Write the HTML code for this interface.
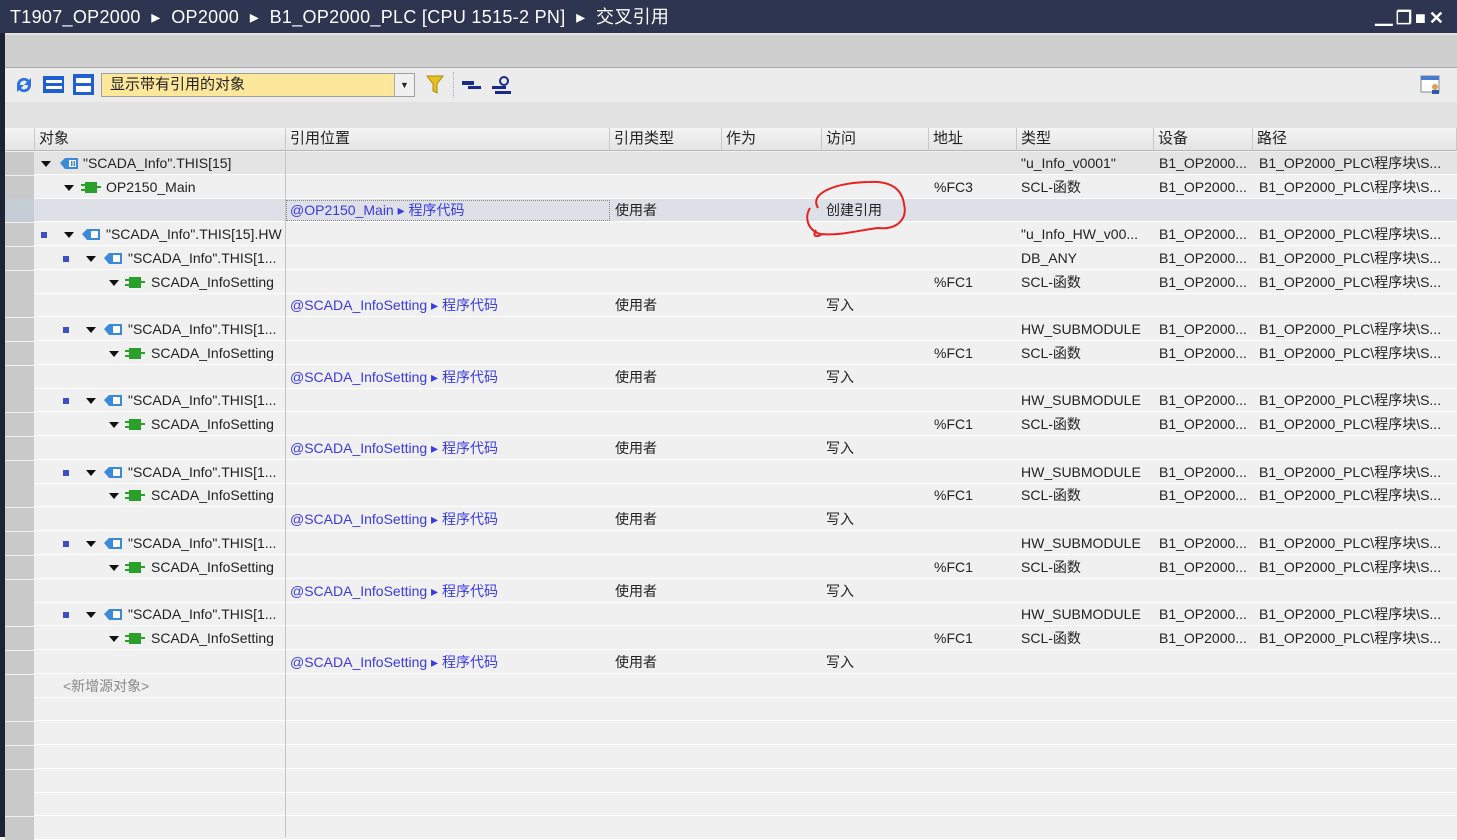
<!DOCTYPE html>
<html><head><meta charset="utf-8"><style>
*{margin:0;padding:0;box-sizing:border-box}
body{width:1457px;height:837px;overflow:hidden;background:#f0f0f0;font-family:"Liberation Sans","Noto Sans CJK SC",sans-serif;font-size:14px;color:#222;position:relative}
.a{position:absolute;white-space:nowrap}
#title{left:0;top:0;width:1457px;height:33px;background:#2e3550;color:#fff;font-size:18px;line-height:34px;padding-left:10px;letter-spacing:0.3px}
.row{position:absolute;left:5px;width:1452px;height:23px;background:#f0f0f0;border-bottom:1px solid #fff}
.rh{position:absolute;left:0;top:0;width:29px;height:23px;background:#c9c9c9}
.row .a{top:0;line-height:23px}
.lnk{color:#3a3ae6}
.tri{width:0;height:0;border-left:5px solid transparent;border-right:5px solid transparent;border-top:6px solid #111;top:9px!important}
.bul{width:6px;height:6px;background:#3a4fc8;top:9px!important}
.hd{position:absolute;top:128px;height:23px;line-height:22px;background:linear-gradient(#f4f4f4,#e4e4e4);border-right:1px solid #c8c8c8;border-bottom:1px solid #b8b8b8;padding-left:4px;font-size:15px}
</style></head><body>
<div id="title" class="a">T1907_OP2000 &nbsp;▸&nbsp; OP2000 &nbsp;▸&nbsp; B1_OP2000_PLC [CPU 1515-2 PN] &nbsp;▸&nbsp; 交叉引用</div>
<div class="a" style="right:10px;top:4px;color:#fff;font-size:18px;font-weight:bold;letter-spacing:3px">▁❐■✕</div>
<div class="a" style="left:0;top:33px;width:1457px;height:35px;background:#cfcfcf;border-top:2px solid #e2e2e2;border-bottom:1px solid #a8a8a8"></div>
<div class="a" style="left:0;top:68px;width:1457px;height:34px;background:#ececec"></div>
<div class="a" style="left:0;top:102px;width:1457px;height:26px;background:#e2e2e2"></div>
<div class="a" style="left:0;top:33px;width:5px;height:804px;background:#1e2233"></div>
<!-- toolbar -->
<svg class="a" style="left:13px;top:74px" width="22" height="22" viewBox="0 0 22 22"><path d="M4 11a7 7 0 0 1 12-5l2-2v7h-7l3-3a4 4 0 0 0-7 3z M18 11a7 7 0 0 1-12 5l-2 2v-7h7l-3 3a4 4 0 0 0 7-3z" fill="#2c6fe0"/></svg>
<svg class="a" style="left:43px;top:75px" width="21" height="19"><rect x="0" y="1" width="21" height="17" fill="#1f5fd0"/><rect x="3" y="5" width="16" height="3" fill="#fff"/><rect x="3" y="11" width="16" height="3" fill="#fff"/></svg>
<svg class="a" style="left:73px;top:74px" width="21" height="21"><rect x="0" y="0" width="21" height="21" fill="#1f5fd0"/><rect x="3" y="4" width="15" height="5" fill="#fff"/><rect x="3" y="12" width="15" height="6" fill="#fff"/></svg>
<div class="a" style="left:101px;top:73px;width:314px;height:24px;background:#fde79a;border:1px solid #a0a0a0;line-height:21px;padding-left:8px;font-size:15px">显示带有引用的对象</div>
<div class="a" style="left:394px;top:74px;width:20px;height:22px;background:#f0f0f0;border-left:1px solid #aaa;font-size:9px;line-height:22px;text-align:center">▼</div>
<svg class="a" style="left:426px;top:75px" width="18" height="20"><path d="M1 1h16l-6 8v9l-4-2v-7z" fill="#e8c020" stroke="#a88a10"/></svg>
<div class="a" style="left:453px;top:72px;width:1px;height:26px;border-left:1px dotted #aaa"></div>
<svg class="a" style="left:461px;top:78px" width="22" height="14"><rect x="1" y="3" width="12" height="4" fill="#1a2a8a"/><rect x="7" y="8" width="13" height="3" fill="#1a2a8a"/></svg>
<svg class="a" style="left:490px;top:74px" width="24" height="22"><circle cx="14" cy="7" r="4" fill="none" stroke="#1a2a8a" stroke-width="2"/><rect x="2" y="12" width="14" height="3" fill="#1a2a8a"/><rect x="5" y="17" width="16" height="3" fill="#1a2a8a"/></svg>
<svg class="a" style="left:1420px;top:75px" width="22" height="20"><rect x="1" y="1" width="18" height="16" fill="#fff" stroke="#7a8aa0"/><rect x="1" y="1" width="18" height="4" fill="#4a7ad0"/><circle cx="15" cy="12" r="3" fill="#e0a050"/><rect x="12" y="15" width="7" height="4" fill="#2a5ab0"/></svg>
<!-- headers -->
<div class="hd" style="left:5px;width:30px"></div>
<div class="hd" style="left:35px;width:251px">对象</div>
<div class="hd" style="left:286px;width:324px">引用位置</div>
<div class="hd" style="left:610px;width:112px">引用类型</div>
<div class="hd" style="left:722px;width:100px">作为</div>
<div class="hd" style="left:822px;width:107px">访问</div>
<div class="hd" style="left:929px;width:88px">地址</div>
<div class="hd" style="left:1017px;width:137px">类型</div>
<div class="hd" style="left:1154px;width:99px">设备</div>
<div class="hd" style="left:1253px;width:204px">路径</div>

<!-- rows -->
<div class="row" style="top:152px;background:#e4e4e4"><div class="rh"></div><div class="a tri" style="left:36px"></div><svg class="a" style="left:54px;top:5px" width="20" height="13"><path d="M1 6l5-5h13v11H6z" fill="#3a8ad8"/><rect x="10" y="3" width="7" height="7" fill="#fff"/><rect x="12" y="4" width="1.5" height="5" fill="#3a8ad8"/><rect x="14.5" y="4" width="1.5" height="5" fill="#3a8ad8"/></svg><div class="a" style="left:78px">"SCADA_Info".THIS[15]</div><div class="a" style="left:1016px">"u_Info_v0001"</div><div class="a" style="left:1154px">B1_OP2000...</div><div class="a" style="left:1254px">B1_OP2000_PLC\程序块\S...</div></div>
<div class="row" style="top:176px"><div class="rh"></div><div class="a tri" style="left:59px"></div><svg class="a" style="left:76px;top:5px" width="20" height="13"><rect x="4" y="1" width="12" height="11" fill="#2aa02a"/><rect x="0" y="3" width="5" height="2" fill="#2aa02a"/><rect x="0" y="8" width="5" height="2" fill="#2aa02a"/><rect x="15" y="5" width="5" height="2" fill="#2aa02a"/></svg><div class="a" style="left:101px">OP2150_Main</div><div class="a" style="left:929px">%FC3</div><div class="a" style="left:1016px">SCL-函数</div><div class="a" style="left:1154px">B1_OP2000...</div><div class="a" style="left:1254px">B1_OP2000_PLC\程序块\S...</div></div>
<div class="row" style="top:199px;background:#dde1e7"><div class="rh" style="background:#c4ccd6"></div><div class="a" style="left:281px;top:1px;width:324px;height:21px;border:1px dotted #888"></div><div class="a lnk" style="left:285px">@OP2150_Main ▸ 程序代码</div><div class="a" style="left:610px">使用者</div><div class="a" style="left:821px">创建引用</div></div>
<div class="row" style="top:223px"><div class="rh"></div><div class="a bul" style="left:36px"></div><div class="a tri" style="left:59px"></div><svg class="a" style="left:76px;top:5px" width="20" height="13"><path d="M1 6l5-5h13v11H6z" fill="#3a8ad8"/><rect x="10" y="3" width="7" height="7" fill="#fff"/></svg><div class="a" style="left:101px">"SCADA_Info".THIS[15].HW</div><div class="a" style="left:1016px">"u_Info_HW_v00...</div><div class="a" style="left:1154px">B1_OP2000...</div><div class="a" style="left:1254px">B1_OP2000_PLC\程序块\S...</div></div>
<div class="row" style="top:247px"><div class="rh"></div><div class="a bul" style="left:58px"></div><div class="a tri" style="left:81px"></div><svg class="a" style="left:98px;top:5px" width="20" height="13"><path d="M1 6l5-5h13v11H6z" fill="#3a8ad8"/><rect x="10" y="3" width="7" height="7" fill="#fff"/></svg><div class="a" style="left:123px">"SCADA_Info".THIS[1...</div><div class="a" style="left:1016px">DB_ANY</div><div class="a" style="left:1154px">B1_OP2000...</div><div class="a" style="left:1254px">B1_OP2000_PLC\程序块\S...</div></div>
<div class="row" style="top:271px"><div class="rh"></div><div class="a tri" style="left:104px"></div><svg class="a" style="left:120px;top:5px" width="20" height="13"><rect x="4" y="1" width="12" height="11" fill="#2aa02a"/><rect x="0" y="3" width="5" height="2" fill="#2aa02a"/><rect x="0" y="8" width="5" height="2" fill="#2aa02a"/><rect x="15" y="5" width="5" height="2" fill="#2aa02a"/></svg><div class="a" style="left:146px">SCADA_InfoSetting</div><div class="a" style="left:929px">%FC1</div><div class="a" style="left:1016px">SCL-函数</div><div class="a" style="left:1154px">B1_OP2000...</div><div class="a" style="left:1254px">B1_OP2000_PLC\程序块\S...</div></div>
<div class="row" style="top:294px"><div class="rh"></div><div class="a lnk" style="left:285px">@SCADA_InfoSetting ▸ 程序代码</div><div class="a" style="left:610px">使用者</div><div class="a" style="left:821px">写入</div></div>

<div class="row" style="top:318px"><div class="rh"></div><div class="a bul" style="left:58px"></div><div class="a tri" style="left:81px"></div><svg class="a" style="left:98px;top:5px" width="20" height="13"><path d="M1 6l5-5h13v11H6z" fill="#3a8ad8"/><rect x="10" y="3" width="7" height="7" fill="#fff"/></svg><div class="a" style="left:123px">"SCADA_Info".THIS[1...</div><div class="a" style="left:1016px">HW_SUBMODULE</div><div class="a" style="left:1154px">B1_OP2000...</div><div class="a" style="left:1254px">B1_OP2000_PLC\程序块\S...</div></div>
<div class="row" style="top:342px"><div class="rh"></div><div class="a tri" style="left:104px"></div><svg class="a" style="left:120px;top:5px" width="20" height="13"><rect x="4" y="1" width="12" height="11" fill="#2aa02a"/><rect x="0" y="3" width="5" height="2" fill="#2aa02a"/><rect x="0" y="8" width="5" height="2" fill="#2aa02a"/><rect x="15" y="5" width="5" height="2" fill="#2aa02a"/></svg><div class="a" style="left:146px">SCADA_InfoSetting</div><div class="a" style="left:929px">%FC1</div><div class="a" style="left:1016px">SCL-函数</div><div class="a" style="left:1154px">B1_OP2000...</div><div class="a" style="left:1254px">B1_OP2000_PLC\程序块\S...</div></div>
<div class="row" style="top:366px"><div class="rh"></div><div class="a lnk" style="left:285px">@SCADA_InfoSetting ▸ 程序代码</div><div class="a" style="left:610px">使用者</div><div class="a" style="left:821px">写入</div></div>

<div class="row" style="top:389px"><div class="rh"></div><div class="a bul" style="left:58px"></div><div class="a tri" style="left:81px"></div><svg class="a" style="left:98px;top:5px" width="20" height="13"><path d="M1 6l5-5h13v11H6z" fill="#3a8ad8"/><rect x="10" y="3" width="7" height="7" fill="#fff"/></svg><div class="a" style="left:123px">"SCADA_Info".THIS[1...</div><div class="a" style="left:1016px">HW_SUBMODULE</div><div class="a" style="left:1154px">B1_OP2000...</div><div class="a" style="left:1254px">B1_OP2000_PLC\程序块\S...</div></div>
<div class="row" style="top:413px"><div class="rh"></div><div class="a tri" style="left:104px"></div><svg class="a" style="left:120px;top:5px" width="20" height="13"><rect x="4" y="1" width="12" height="11" fill="#2aa02a"/><rect x="0" y="3" width="5" height="2" fill="#2aa02a"/><rect x="0" y="8" width="5" height="2" fill="#2aa02a"/><rect x="15" y="5" width="5" height="2" fill="#2aa02a"/></svg><div class="a" style="left:146px">SCADA_InfoSetting</div><div class="a" style="left:929px">%FC1</div><div class="a" style="left:1016px">SCL-函数</div><div class="a" style="left:1154px">B1_OP2000...</div><div class="a" style="left:1254px">B1_OP2000_PLC\程序块\S...</div></div>
<div class="row" style="top:437px"><div class="rh"></div><div class="a lnk" style="left:285px">@SCADA_InfoSetting ▸ 程序代码</div><div class="a" style="left:610px">使用者</div><div class="a" style="left:821px">写入</div></div>

<div class="row" style="top:461px"><div class="rh"></div><div class="a bul" style="left:58px"></div><div class="a tri" style="left:81px"></div><svg class="a" style="left:98px;top:5px" width="20" height="13"><path d="M1 6l5-5h13v11H6z" fill="#3a8ad8"/><rect x="10" y="3" width="7" height="7" fill="#fff"/></svg><div class="a" style="left:123px">"SCADA_Info".THIS[1...</div><div class="a" style="left:1016px">HW_SUBMODULE</div><div class="a" style="left:1154px">B1_OP2000...</div><div class="a" style="left:1254px">B1_OP2000_PLC\程序块\S...</div></div>
<div class="row" style="top:484px"><div class="rh"></div><div class="a tri" style="left:104px"></div><svg class="a" style="left:120px;top:5px" width="20" height="13"><rect x="4" y="1" width="12" height="11" fill="#2aa02a"/><rect x="0" y="3" width="5" height="2" fill="#2aa02a"/><rect x="0" y="8" width="5" height="2" fill="#2aa02a"/><rect x="15" y="5" width="5" height="2" fill="#2aa02a"/></svg><div class="a" style="left:146px">SCADA_InfoSetting</div><div class="a" style="left:929px">%FC1</div><div class="a" style="left:1016px">SCL-函数</div><div class="a" style="left:1154px">B1_OP2000...</div><div class="a" style="left:1254px">B1_OP2000_PLC\程序块\S...</div></div>
<div class="row" style="top:508px"><div class="rh"></div><div class="a lnk" style="left:285px">@SCADA_InfoSetting ▸ 程序代码</div><div class="a" style="left:610px">使用者</div><div class="a" style="left:821px">写入</div></div>

<div class="row" style="top:532px"><div class="rh"></div><div class="a bul" style="left:58px"></div><div class="a tri" style="left:81px"></div><svg class="a" style="left:98px;top:5px" width="20" height="13"><path d="M1 6l5-5h13v11H6z" fill="#3a8ad8"/><rect x="10" y="3" width="7" height="7" fill="#fff"/></svg><div class="a" style="left:123px">"SCADA_Info".THIS[1...</div><div class="a" style="left:1016px">HW_SUBMODULE</div><div class="a" style="left:1154px">B1_OP2000...</div><div class="a" style="left:1254px">B1_OP2000_PLC\程序块\S...</div></div>
<div class="row" style="top:556px"><div class="rh"></div><div class="a tri" style="left:104px"></div><svg class="a" style="left:120px;top:5px" width="20" height="13"><rect x="4" y="1" width="12" height="11" fill="#2aa02a"/><rect x="0" y="3" width="5" height="2" fill="#2aa02a"/><rect x="0" y="8" width="5" height="2" fill="#2aa02a"/><rect x="15" y="5" width="5" height="2" fill="#2aa02a"/></svg><div class="a" style="left:146px">SCADA_InfoSetting</div><div class="a" style="left:929px">%FC1</div><div class="a" style="left:1016px">SCL-函数</div><div class="a" style="left:1154px">B1_OP2000...</div><div class="a" style="left:1254px">B1_OP2000_PLC\程序块\S...</div></div>
<div class="row" style="top:580px"><div class="rh"></div><div class="a lnk" style="left:285px">@SCADA_InfoSetting ▸ 程序代码</div><div class="a" style="left:610px">使用者</div><div class="a" style="left:821px">写入</div></div>

<div class="row" style="top:603px"><div class="rh"></div><div class="a bul" style="left:58px"></div><div class="a tri" style="left:81px"></div><svg class="a" style="left:98px;top:5px" width="20" height="13"><path d="M1 6l5-5h13v11H6z" fill="#3a8ad8"/><rect x="10" y="3" width="7" height="7" fill="#fff"/></svg><div class="a" style="left:123px">"SCADA_Info".THIS[1...</div><div class="a" style="left:1016px">HW_SUBMODULE</div><div class="a" style="left:1154px">B1_OP2000...</div><div class="a" style="left:1254px">B1_OP2000_PLC\程序块\S...</div></div>
<div class="row" style="top:627px"><div class="rh"></div><div class="a tri" style="left:104px"></div><svg class="a" style="left:120px;top:5px" width="20" height="13"><rect x="4" y="1" width="12" height="11" fill="#2aa02a"/><rect x="0" y="3" width="5" height="2" fill="#2aa02a"/><rect x="0" y="8" width="5" height="2" fill="#2aa02a"/><rect x="15" y="5" width="5" height="2" fill="#2aa02a"/></svg><div class="a" style="left:146px">SCADA_InfoSetting</div><div class="a" style="left:929px">%FC1</div><div class="a" style="left:1016px">SCL-函数</div><div class="a" style="left:1154px">B1_OP2000...</div><div class="a" style="left:1254px">B1_OP2000_PLC\程序块\S...</div></div>
<div class="row" style="top:651px"><div class="rh"></div><div class="a lnk" style="left:285px">@SCADA_InfoSetting ▸ 程序代码</div><div class="a" style="left:610px">使用者</div><div class="a" style="left:821px">写入</div></div>
<div class="row" style="top:675px"><div class="rh"></div><div class="a" style="left:58px;color:#888">&lt;新增源对象&gt;</div></div>
<div class="row" style="top:698px"><div class="rh"></div></div>
<div class="row" style="top:722px"><div class="rh"></div></div>
<div class="row" style="top:746px"><div class="rh"></div></div>
<div class="row" style="top:770px"><div class="rh"></div></div>
<div class="row" style="top:793px"><div class="rh"></div></div>
<div class="row" style="top:817px"><div class="rh"></div></div>
<div class="a" style="left:285px;top:151px;width:1px;height:686px;background:#c4c4c4"></div>
<svg class="a" style="left:800px;top:178px" width="112" height="62"><path d="M18 30 C8 14 40 4 70 4 C92 3 102 12 104 26 C108 42 96 52 78 50 C60 52 40 58 20 56 C8 52 4 40 10 30 M22 56 C16 60 12 58 16 52" fill="none" stroke="#e82020" stroke-width="2"/></svg>
</body></html>
